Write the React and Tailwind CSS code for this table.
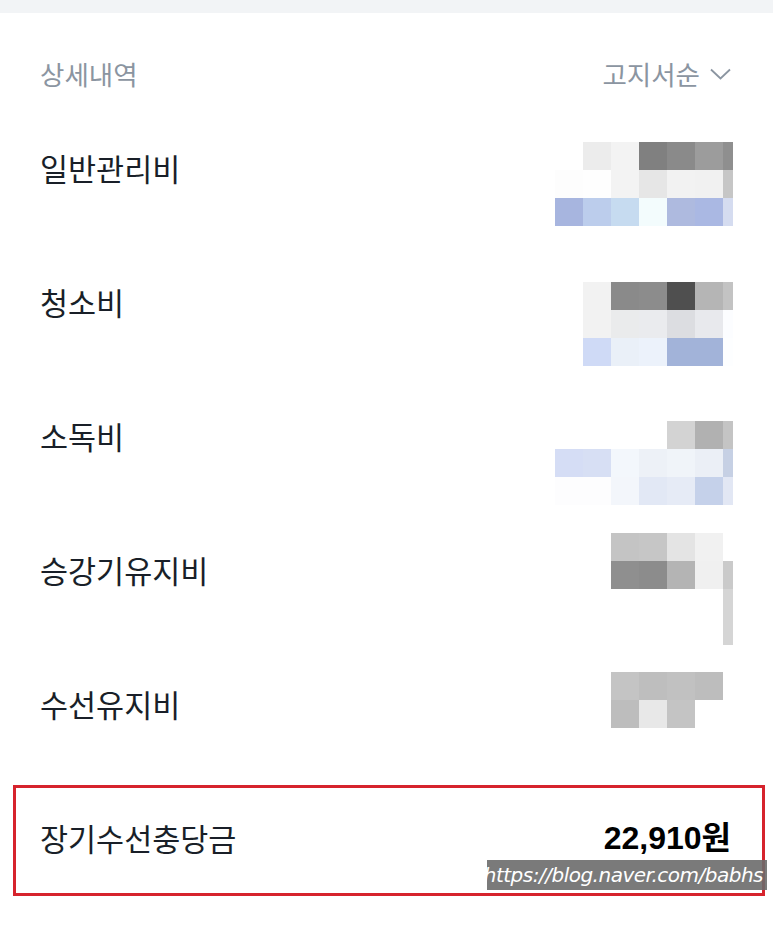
import React from "react";

const COLS = ["w-[28px]", "w-[28px]", "w-[28px]", "w-[28px]", "w-[28px]", "w-[28px]", "w-[10px]"];

const blocks = [
  {
    mt: "mt-[41px]",
    rows: [
      ["bg-transparent", "bg-[#ececec]", "bg-[#f3f3f3]", "bg-[#808080]", "bg-[#8a8a8a]", "bg-[#9c9c9c]", "bg-[#8f8f8f]"],
      ["bg-[#fdfdfd]", "bg-[#fefefe]", "bg-[#f3f3f3]", "bg-[#e6e6e6]", "bg-[#f2f2f2]", "bg-[#f1f1f1]", "bg-[#c6c6c6]"],
      ["bg-[#a7b5df]", "bg-[#bccdec]", "bg-[#c6dbf0]", "bg-[#f3fcfd]", "bg-[#aebadf]", "bg-[#aab8e3]", "bg-[#d5dcf0]"],
    ],
  },
  {
    mt: "mt-[47px]",
    rows: [
      ["bg-transparent", "bg-[#f2f2f2]", "bg-[#8a8a8a]", "bg-[#8c8c8c]", "bg-[#4f4f4f]", "bg-[#b5b5b5]", "bg-[#c3c3c3]"],
      ["bg-transparent", "bg-[#f2f2f2]", "bg-[#eaebec]", "bg-[#eaebee]", "bg-[#dcdde1]", "bg-[#e8e9ed]", "bg-[#fcfdff]"],
      ["bg-transparent", "bg-[#cfdaf6]", "bg-[#eaf0f8]", "bg-[#ecf2fb]", "bg-[#a2b3d9]", "bg-[#a2b3d9]", "bg-[#fdfeff]"],
    ],
  },
  {
    mt: "mt-[52px]",
    rows: [
      ["bg-transparent", "bg-transparent", "bg-transparent", "bg-transparent", "bg-[#d3d3d3]", "bg-[#b1b1b1]", "bg-[#c4c4c4]"],
      ["bg-[#d5ddf5]", "bg-[#d7dff4]", "bg-[#f3f7fc]", "bg-[#edf1f7]", "bg-[#f0f4f9]", "bg-[#ebeff6]", "bg-[#c6d0e4]"],
      ["bg-[#fdfdfe]", "bg-[#fdfdfe]", "bg-[#f3f6fb]", "bg-[#e2e8f5]", "bg-[#e6ebf6]", "bg-[#c5d1ea]", "bg-[#e2e7f4]"],
    ],
  },
  {
    mt: "mt-[30px]",
    rows: [
      ["bg-transparent", "bg-transparent", "bg-[#c4c4c4]", "bg-[#c6c6c6]", "bg-[#e4e4e4]", "bg-[#f1f1f1]", "bg-transparent"],
      ["bg-transparent", "bg-transparent", "bg-[#8f8f8f]", "bg-[#8c8c8c]", "bg-[#b4b4b4]", "bg-[#f0f0f0]", "bg-[#cacaca]"],
      ["bg-transparent", "bg-transparent", "bg-transparent", "bg-transparent", "bg-transparent", "bg-transparent", "bg-[#d5d5d5]"],
      ["bg-transparent", "bg-transparent", "bg-transparent", "bg-transparent", "bg-transparent", "bg-transparent", "bg-[#d5d5d5]"],
    ],
  },
  {
    mt: "mt-[35px]",
    rows: [
      ["bg-transparent", "bg-transparent", "bg-[#c4c4c4]", "bg-[#bebebe]", "bg-[#c1c1c1]", "bg-[#bdbdbd]", "bg-transparent"],
      ["bg-transparent", "bg-transparent", "bg-[#bdbdbd]", "bg-[#e8e8e8]", "bg-[#c4c4c4]", "bg-transparent", "bg-transparent"],
    ],
  },
];

const labels = ["일반관리비", "청소비", "소독비", "승강기유지비", "수선유지비"];

function Mosaic({ rows, mt }) {
  return (
    <div className={`flex flex-col self-start ${mt}`}>
      {rows.map((r, i) => (
        <div key={i} className="flex h-[28px]">
          {r.map((c, j) => (
            <div key={j} className={`h-[28px] ${COLS[j]} ${c}`} />
          ))}
        </div>
      ))}
    </div>
  );
}

export default function App() {
  return (
    <div
      className="w-[773px] h-[931px] bg-white overflow-hidden"
      style={{ fontFamily: '"Noto Sans CJK KR", "Noto Sans", sans-serif' }}
    >
      <div className="h-[13px] bg-[#f2f4f6]" />
      <div className="flex items-center justify-between pl-[40px] pr-[42px] pt-[46px] pb-[12px] h-[88px]">
        <span className="text-[26.5px] leading-[30px] text-[#8b95a1]">상세내역</span>
        <span className="flex items-center gap-[10px] text-[26.5px] leading-[30px] text-[#8b95a1]">
          고지서순
          <svg width="21" height="12" viewBox="0 0 21 12" fill="none">
            <path d="M1 1.5 L10.5 10.5 L20 1.5" stroke="#8b95a1" strokeWidth="1.8" />
          </svg>
        </span>
      </div>
      {labels.map((l, i) => (
        <div key={l} className="flex justify-between items-center h-[134px] pl-[40px] pr-[40px]">
          <span className="text-[30.5px] leading-[36px] text-[#191f28]">{l}</span>
          <Mosaic rows={blocks[i].rows} mt={blocks[i].mt} />
        </div>
      ))}
      <div className="relative flex justify-between items-center h-[134px] pl-[40px] pr-[42px]">
        <span className="text-[30.5px] leading-[36px] text-[#191f28]">장기수선충당금</span>
        <span
          className="text-[32px] leading-[36px] font-bold text-black"
          style={{ fontFamily: '"Liberation Sans", "Noto Sans CJK KR", sans-serif' }}
        >
          22,910원
        </span>
        <div className="absolute left-[13px] top-[14px] w-[752px] h-[111px] border-[3px] border-[#d6232d]" />
        <div className="absolute left-[487px] top-[89px] w-[280px] h-[30px] bg-[#6b6b6b]/90 flex items-center justify-end pr-[4px]">
          <span
            className="text-white italic text-[20px] leading-[24px] tracking-[-0.5px]"
            style={{ fontFamily: '"DejaVu Sans", sans-serif', fontWeight: 300 }}
          >
            https://blog.naver.com/babhs
          </span>
        </div>
      </div>
    </div>
  );
}
